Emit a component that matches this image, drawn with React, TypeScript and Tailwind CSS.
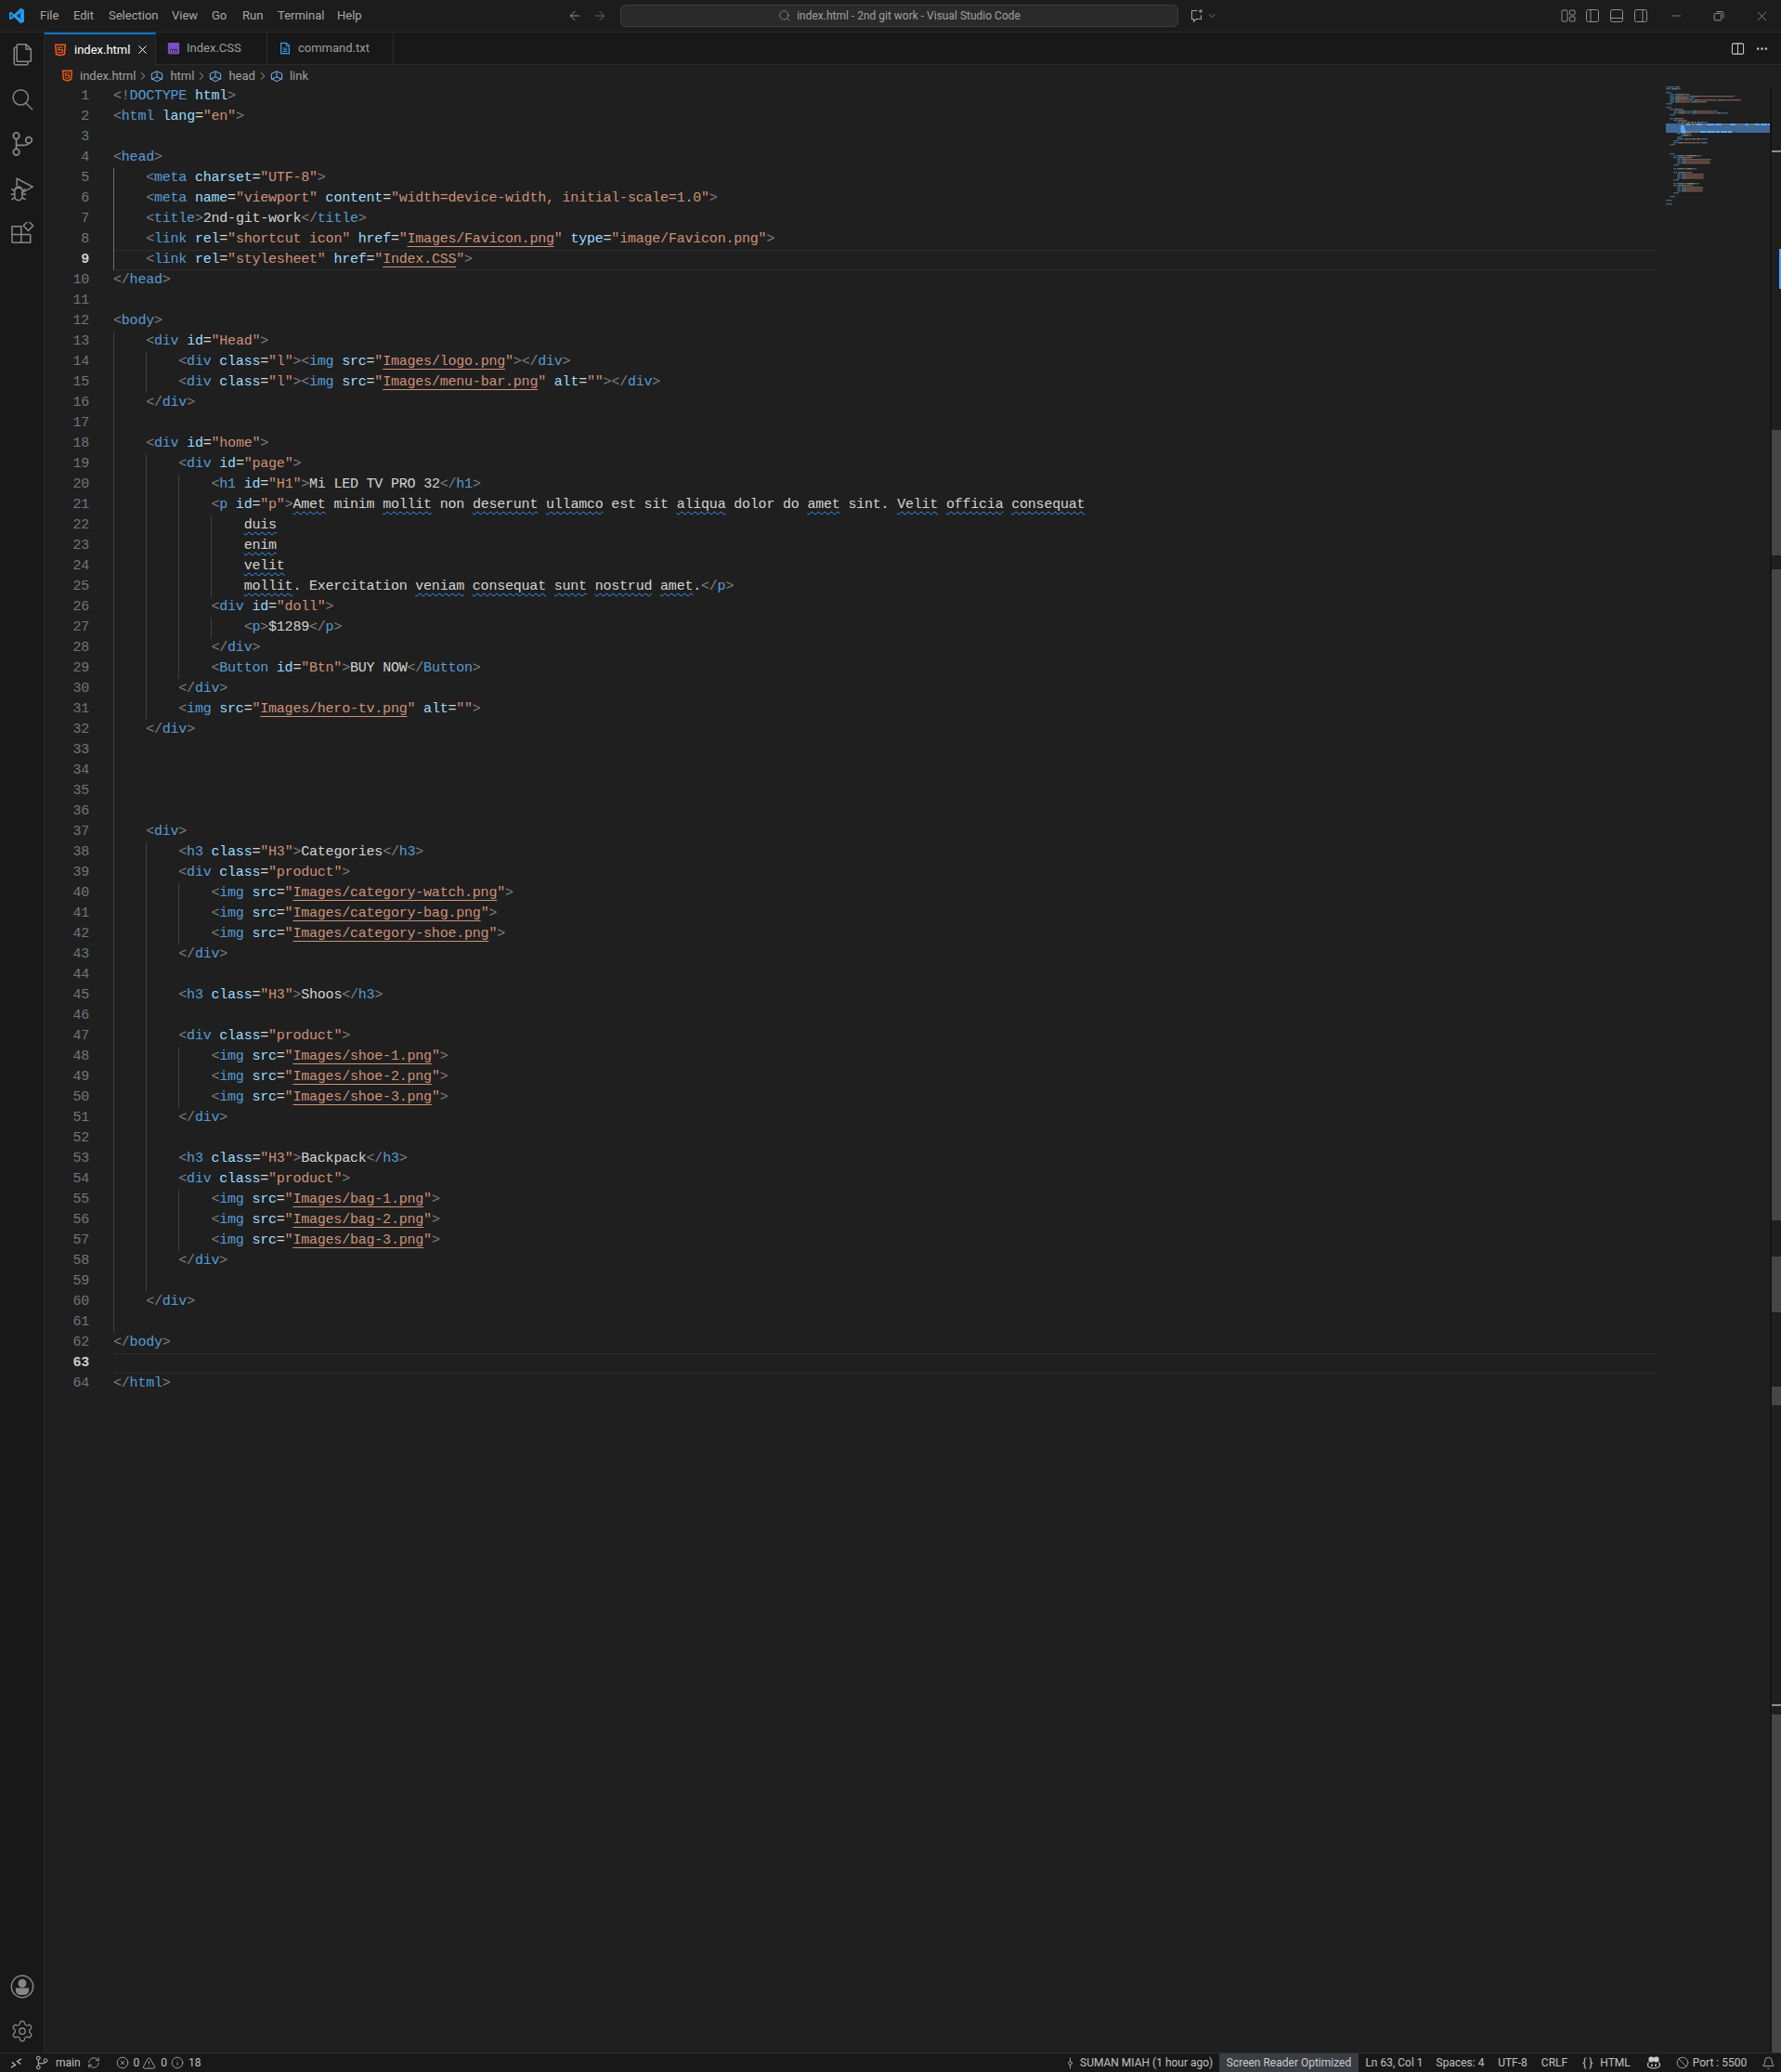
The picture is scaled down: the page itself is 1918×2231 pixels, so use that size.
import { ArrowLeft, ArrowRight, Ban, Bell, ChevronDown, ChevronRight, CircleX, Ellipsis, GitCommitVertical, Info, Minus, RefreshCw, Search, Settings, TriangleAlert, X } from "lucide-react";

const SOURCE = [
  '<!DOCTYPE html>',
  '<html lang="en">',
  '',
  '<head>',
  '    <meta charset="UTF-8">',
  '    <meta name="viewport" content="width=device-width, initial-scale=1.0">',
  '    <title>2nd-git-work</title>',
  '    <link rel="shortcut icon" href="Images/Favicon.png" type="image/Favicon.png">',
  '    <link rel="stylesheet" href="Index.CSS">',
  '</head>',
  '',
  '<body>',
  '    <div id="Head">',
  '        <div class="l"><img src="Images/logo.png"></div>',
  '        <div class="l"><img src="Images/menu-bar.png" alt=""></div>',
  '    </div>',
  '',
  '    <div id="home">',
  '        <div id="page">',
  '            <h1 id="H1">Mi LED TV PRO 32</h1>',
  '            <p id="p">Amet minim mollit non deserunt ullamco est sit aliqua dolor do amet sint. Velit officia consequat',
  '                duis',
  '                enim',
  '                velit',
  '                mollit. Exercitation veniam consequat sunt nostrud amet.</p>',
  '            <div id="doll">',
  '                <p>$1289</p>',
  '            </div>',
  '            <Button id="Btn">BUY NOW</Button>',
  '        </div>',
  '        <img src="Images/hero-tv.png" alt="">',
  '    </div>',
  '',
  '',
  '',
  '',
  '    <div>',
  '        <h3 class="H3">Categories</h3>',
  '        <div class="product">',
  '            <img src="Images/category-watch.png">',
  '            <img src="Images/category-bag.png">',
  '            <img src="Images/category-shoe.png">',
  '        </div>',
  '',
  '        <h3 class="H3">Shoos</h3>',
  '',
  '        <div class="product">',
  '            <img src="Images/shoe-1.png">',
  '            <img src="Images/shoe-2.png">',
  '            <img src="Images/shoe-3.png">',
  '        </div>',
  '',
  '        <h3 class="H3">Backpack</h3>',
  '        <div class="product">',
  '            <img src="Images/bag-1.png">',
  '            <img src="Images/bag-2.png">',
  '            <img src="Images/bag-3.png">',
  '        </div>',
  '',
  '    </div>',
  '',
  '</body>',
  '',
  '</html>',
];

const SQUIGGLED = new Set(["Amet", "mollit", "deserunt", "ullamco", "aliqua", "amet", "Velit", "officia", "consequat", "duis", "enim", "velit", "veniam", "sunt", "nostrud"]);

type Kind = "punct" | "tag" | "attr" | "str" | "link" | "text" | "squiggle" | "space";
type Token = { text: string; kind: Kind };

const KIND_CLASS: Record<Kind, string> = {
  punct: "text-[#808080]",
  tag: "text-[#569cd6]",
  attr: "text-[#9cdcfe]",
  str: "text-[#ce9178]",
  link: "text-[#ce9178] underline decoration-1 decoration-[#ce9178] underline-offset-[4px]",
  text: "text-[#d4d4d4]",
  squiggle: "text-[#d4d4d4] underline decoration-wavy decoration-1 decoration-[#3794ff] underline-offset-[3px]",
  space: "",
};

const KIND_FILL: Record<Kind, string> = {
  punct: "#47525c",
  tag: "#3a6283",
  attr: "#4f7488",
  str: "#75574b",
  link: "#75574b",
  text: "#7d7d7d",
  squiggle: "#5aa8ff",
  space: "none",
};

function tokenize(src: string): Token[] {
  const out: Token[] = [];
  let rest = src;
  let inTag = false;
  while (rest) {
    let m: RegExpMatchArray | null;
    if (!inTag) {
      m = rest.match(/^(<\/?!?)(\w+)/);
      if (m) {
        out.push({ text: m[1], kind: "punct" }, { text: m[2], kind: "tag" });
        inTag = true;
      } else {
        m = rest.match(/^[^<]+/)!;
        for (const part of m[0].split(/([\w]+)/)) {
          if (part) out.push({ text: part, kind: SQUIGGLED.has(part) ? "squiggle" : "text" });
        }
      }
    } else if ((m = rest.match(/^>/))) {
      out.push({ text: ">", kind: "punct" });
      inTag = false;
    } else if ((m = rest.match(/^"([^"]*)"/))) {
      if (m[1].startsWith("Images/") || m[1] === "Index.CSS") {
        out.push({ text: '"', kind: "str" }, { text: m[1], kind: "link" }, { text: '"', kind: "str" });
      } else {
        out.push({ text: m[0], kind: "str" });
      }
    } else if ((m = rest.match(/^[\w-]+/))) {
      out.push({ text: m[0], kind: "attr" });
    } else if ((m = rest.match(/^=/))) {
      out.push({ text: "=", kind: "text" });
    } else {
      m = rest.match(/^\s+/)!;
      out.push({ text: m[0], kind: "space" });
    }
    rest = rest.slice(m[0].length);
  }
  return out;
}

const indentOf = (s: string) => (s.length - s.trimStart().length) / 4;

const LINES = SOURCE.map((src, i) => {
  let level = indentOf(src);
  if (!src) {
    // blank lines take their guides the way the editor does
    let a = i - 1;
    let b = i + 1;
    while (a >= 0 && !SOURCE[a]) a--;
    while (b < SOURCE.length && !SOURCE[b]) b++;
    const up = a >= 0 ? indentOf(SOURCE[a]) : 0;
    const down = b < SOURCE.length ? indentOf(SOURCE[b]) : 0;
    level = up === down ? up : Math.min(up, down) + 1;
  }
  return { n: i + 1, level, tokens: tokenize(src.trimStart()), indent: indentOf(src) };
});

const Html5 = ({ className = "" }: { className?: string }) => (
  <svg viewBox="0 0 16 16" className={className} fill="none" stroke="#f0561d" strokeWidth="1.8">
    <path d="M2 1.5h12l-1 11.5-5 1.6-5-1.6z" />
    <path d="M11 4.6H5.3l.2 3h5.2l-.3 3-2.4.8-2.4-.8-.1-1" strokeWidth="1.4" />
  </svg>
);

const CssIcon = () => (
  <svg viewBox="0 0 16 16" className="w-[14px] h-[14px]">
    <rect x="1" y="1" width="14" height="14" rx="1.5" fill="#7c4fc9" />
    <path d="M3.5 9h9v4h-9z" fill="#2e1f55" />
    <path d="M4.5 10.5h1.5M7 10.5h1.5M10 10.5h1.5M4.5 12h1.5M7 12h1.5M10 12h1.5" stroke="#c9b5ee" strokeWidth="0.8" />
  </svg>
);

const TxtIcon = () => (
  <svg viewBox="0 0 16 16" className="w-[14px] h-[16px]" fill="none" stroke="#3d9be9" strokeWidth="1.4">
    <path d="M3 1.5h6.5L13 5v9.5H3z" />
    <path d="M5.5 8h5M5.5 10h5M5.5 12h5M9.5 1.5V5H13" strokeWidth="1.1" />
  </svg>
);

const Cube = () => (
  <svg viewBox="0 0 16 16" className="w-[14px] h-[14px] mr-[5px]" fill="none" stroke="#75beff" strokeWidth="1.1">
    <path d="M8 2 14.5 5v6L8 14.5 1.5 11V5z" />
    <path d="M1.5 5 8 8.2 14.5 5M8 8.2v6" transform="rotate(180 8 8.2) translate(0 -.6)" />
  </svg>
);

const Branch = ({ className = "", stroke = "currentColor" }: { className?: string; stroke?: string }) => (
  <svg viewBox="0 0 24 24" className={className} fill="none" stroke={stroke} strokeWidth="1.5">
    <circle cx="6.5" cy="4.5" r="2.8" />
    <circle cx="6.5" cy="19.5" r="2.8" />
    <circle cx="18" cy="8.5" r="2.8" />
    <path d="M6.5 7.3v9.4M6.5 13.2h7c2.5 0 4.5-1 4.5-2" />
  </svg>
);

const Copilot = () => (
  <svg viewBox="0 0 16 16" className="w-[16px] h-[16px]" fill="none" stroke="#cccccc" strokeWidth="1.2">
    <path d="M2.5 7.5c-.8 1-1 2-1 3 0 2 3 3.5 6.5 3.5s6.5-1.5 6.5-3.5c0-1-.2-2-1-3" />
    <rect x="3" y="2" width="4.5" height="5" rx="1.8" fill="#cccccc" />
    <rect x="8.5" y="2" width="4.5" height="5" rx="1.8" fill="#cccccc" />
    <path d="M6 9.5v2.5M10 9.5v2.5" strokeWidth="1.6" />
  </svg>
);

const LayoutIcon = ({ kind }: { kind: "custom" | "left" | "bottom" | "right" }) => (
  <svg viewBox="0 0 16 16" className="w-[16px] h-[16px]" fill="none" stroke="#8f8f8f" strokeWidth="1">
    {kind === "custom" && (
      <>
        <rect x="1" y="2" width="6" height="12" rx="1" />
        <rect x="9.5" y="2" width="5.5" height="5" rx="1" />
        <rect x="9.5" y="9" width="5.5" height="5" rx="1" />
      </>
    )}
    {kind !== "custom" && <rect x="1.5" y="1.5" width="13" height="13" rx="2" />}
    {kind === "left" && <path d="M6 1.5v13" />}
    {kind === "bottom" && <path d="M1.5 10.5h13" />}
    {kind === "right" && <path d="M10 1.5v13" />}
  </svg>
);

const MENU = [
  { label: "File", w: "w-[36px]" },
  { label: "Edit", w: "w-[38px]" },
  { label: "Selection", w: "w-[68px]" },
  { label: "View", w: "w-[43px]" },
  { label: "Go", w: "w-[33px]" },
  { label: "Run", w: "w-[38px]" },
  { label: "Terminal", w: "w-[64px]" },
  { label: "Help", w: "w-[40px]" },
];

const TitleBar = () => (
  <div className="flex items-center h-[35px] shrink-0 bg-[#1c1c1c] border-b border-[#2b2b2b] text-[13px] text-[#a8a8a8]">
    <div className="w-[43px] flex justify-center pr-[7px]">
      <svg viewBox="0 0 24 24" className="w-[18px] h-[18px]">
        <path fill="#1f9cf0" d="M17.6 1 8.3 9.9 3.6 6.3 1.5 7.4v9.2l2.1 1.1 4.7-3.6 9.3 8.9 5-2.4V3.4zM17.5 7.6v8.8l-5.6-4.4zM3.8 9.5 6.4 12l-2.6 2.5z" />
      </svg>
    </div>
    {MENU.map(m => (
      <span key={m.label} className={m.w}>{m.label}</span>
    ))}
    <div className="w-[208px]" />
    <ArrowLeft size={16} strokeWidth={1.25} className="text-[#a8a8a8]" />
    <ArrowRight size={16} strokeWidth={1.25} className="ml-[11px] text-[#777777]" />
    <div className="ml-[14px] w-[601px] h-[24px] flex items-center justify-center gap-[6px] rounded-[6px] bg-[#2a2a2a] border border-[#3e3e3e] text-[12px] text-[#a0a0a0]">
      <Search size={14} strokeWidth={1.25} />
      <span>index.html - 2nd git work - Visual Studio Code</span>
    </div>
    <svg viewBox="0 0 16 16" className="ml-[12px] w-[16px] h-[16px]" fill="none" stroke="#a0a0a0" strokeWidth="1.1">
      <path d="M8.5 2.5H2.5v9h2v2.5l3-2.5h5v-4" />
      <path d="M12 1v4M10 3h4" />
    </svg>
    <ChevronDown size={12} strokeWidth={1.25} className="ml-[2px]" />
    <div className="ml-auto flex items-center">
      <div className="flex gap-[10px] mr-[22px]">
        <LayoutIcon kind="custom" />
        <LayoutIcon kind="left" />
        <LayoutIcon kind="bottom" />
        <LayoutIcon kind="right" />
      </div>
      <Minus size={16} strokeWidth={1} className="mr-[32px]" />
      <svg viewBox="0 0 16 16" className="w-[12px] h-[12px] mr-[32px]" fill="none" stroke="#a8a8a8" strokeWidth="1.1">
        <rect x="1.5" y="4.5" width="10" height="10" rx="1.5" />
        <path d="M5 2h7.5a2 2 0 0 1 2 2v7.5" />
      </svg>
      <X size={17} strokeWidth={1} className="mr-[12px]" />
    </div>
  </div>
);

const ActivityBar = () => (
  <div className="w-[48px] shrink-0 flex flex-col items-center pt-[8px] pb-[10px] gap-[21px] bg-[#181818] border-r border-[#2b2b2b] text-[#868686]">
    <svg viewBox="0 -1 24 24" className="w-[28px] h-[28px]" fill="none" stroke="#868686" strokeWidth="1.3">
      <path d="M8 3h7.5L20 7.5V18a1 1 0 0 1-1 1H8a1 1 0 0 1-1-1V4a1 1 0 0 1 1-1z" />
      <path d="M15.5 3v4.5H20M7 6H5.5a1 1 0 0 0-1 1v13a2 2 0 0 0 2 2H16a1 1 0 0 0 1-1v-2" />
    </svg>
    <svg viewBox="0 -1 24 24" className="w-[28px] h-[28px]" fill="none" stroke="#868686" strokeWidth="1.3">
      <circle cx="10.5" cy="10" r="7" />
      <path d="m15.5 15.5 6 6" />
    </svg>
    <Branch className="w-[28px] h-[28px]" stroke="#868686" />
    <svg viewBox="0 1.5 24 24" className="w-[28px] h-[28px]" fill="none" stroke="#868686" strokeWidth="1.3">
      <path d="M7 10V3.5L21.5 11 11 17" />
      <path d="M5 14.5a3.5 3.5 0 0 1 7 0V20a3.5 3.5 0 0 1-7 0zM2 13l3 2M15 13l-3 2M1.5 18H5M12 18h3.5M2 23l3-2M15 23l-3-2M5.5 13.5l2-1.5 2 0 2 1.5" />
    </svg>
    <svg viewBox="0 2.5 24 24" className="w-[28px] h-[28px]" fill="none" stroke="#868686" strokeWidth="1.3">
      <path d="M2.5 6.5h8.5v15H3a.5.5 0 0 1-.5-.5zM2.5 14h17M11 21.5h8.5v-7.5M11 14V8" />
      <path d="m17.5 1.5 4.5 4.5-4.5 4.5L13 6z" />
    </svg>
    <div className="mt-auto flex flex-col items-center gap-[21px]">
      <svg viewBox="0 0 24 24" className="w-[28px] h-[28px]" fill="none" stroke="#868686" strokeWidth="1.3">
        <circle cx="12" cy="12" r="10" />
        <circle cx="12" cy="9" r="3.2" fill="#868686" />
        <path d="M6.5 14h11v1.5a4 4 0 0 1-4 3.5h-3a4 4 0 0 1-4-3.5z" fill="#868686" />
      </svg>
      <Settings size={26} strokeWidth={1.2} />
    </div>
  </div>
);

const TabBar = () => (
  <div className="flex h-[35px] shrink-0 bg-[#181818] border-b border-[#2b2b2b] text-[13px] text-[#9d9d9d]">
    <div className="w-[120px] h-[35px] flex items-center pl-[10px] bg-[#1f1f1f] border-t-2 border-t-[#0078d4] border-r border-r-[#2b2b2b] text-white">
      <Html5 className="w-[14px] h-[14px]" />
      <span className="ml-[8px]">index.html</span>
      <X size={15} strokeWidth={1.6} className="ml-auto mr-[6px]" />
    </div>
    <div className="w-[120px] flex items-center pl-[12px] border-r border-[#2b2b2b]">
      <CssIcon />
      <span className="ml-[7px]">Index.CSS</span>
    </div>
    <div className="w-[136px] flex items-center pl-[12px] border-r border-[#2b2b2b]">
      <TxtIcon />
      <span className="ml-[7px]">command.txt</span>
    </div>
    <div className="ml-auto flex items-center mr-[13px] text-[#cccccc]">
      <svg viewBox="0 0 16 16" className="w-[15px] h-[15px]" fill="none" stroke="#cccccc" strokeWidth="1.1">
        <rect x="1.5" y="2" width="13" height="12" rx="1.5" />
        <path d="M8 2v12" />
      </svg>
      <Ellipsis size={15} className="ml-[11px]" />
    </div>
  </div>
);

const Crumb = () => <ChevronRight size={14} strokeWidth={1.5} className="-mx-[1px] text-[#b4b4b4]" />;

const Breadcrumb = () => (
  <div className="flex items-center h-[23px] shrink-0 pl-[18px] gap-[2px] text-[13px] text-[#a0a0a0]">
    <Html5 className="w-[13px] h-[13px]" />
    <span className="ml-[5px]">index.html</span>
    <Crumb />
    <Cube />
    <span>html</span>
    <Crumb />
    <Cube />
    <span>head</span>
    <Crumb />
    <Cube />
    <span>link</span>
  </div>
);

const CodeRow = ({ line }: { line: (typeof LINES)[number] }) => {
  const active = line.n === 9 || line.n === 63;
  return (
    <div className="flex h-[22px]">
      <span className={`w-[48px] shrink-0 text-right leading-[22px] ${active ? "text-[#cccccc] font-bold" : "text-[#6e7681]"}`}>{line.n}</span>
      <div className="w-[26px] shrink-0" />
      <div className={`flex-1 min-w-0 flex items-center ${active ? "border-y border-[#2c2c2c]" : ""}`}>
        {Array.from({ length: line.level }, (_, i) => (
          <span key={i} className={`w-[35.16px] h-[22px] shrink-0 border-l ${i === 0 && line.n >= 5 && line.n <= 9 ? "border-[#707070]" : "border-[#404040]"}`} />
        ))}
        <span className="whitespace-pre">
          {line.tokens.map((t, i) => (
            <span key={i} className={KIND_CLASS[t.kind]}>{t.text}</span>
          ))}
        </span>
      </div>
    </div>
  );
};

const Minimap = () => {
  const rects: { x: number; y: number; w: number; fill: string; bright: boolean }[] = [];
  LINES.forEach((line, i) => {
    let col = line.indent * 4;
    line.tokens.forEach(t => {
      if (t.kind !== "space" && t.text.trim()) {
        rects.push({ x: col, y: i * 2, w: t.text.length, fill: KIND_FILL[t.kind], bright: t.kind === "squiggle" });
      }
      col += t.text.length;
    });
  });
  return (
    <div className="w-[112px] shrink-0 overflow-hidden">
      <svg width="112" height="140" viewBox="0 0 112 140">
        <rect x="0" y="40" width="112" height="10" fill="#3f6897" />
        {rects.map((r, i) => (
          <rect key={i} x={r.x} y={r.y} width={r.w} height={r.bright ? 2 : 1.4} fill={r.fill} />
        ))}
      </svg>
    </div>
  );
};

const ScrollBar = () => (
  <div className="w-[12px] shrink-0 flex flex-col border-l-2 border-[#141414]">
    <div className="h-[69px] shrink-0" />
    <div className="h-[2px] shrink-0 bg-[#8f8f8f]" />
    <div className="h-[104px] shrink-0" />
    <div className="h-[43px] w-[2px] self-end shrink-0 bg-[#4da3ff]" />
    <div className="h-[152px] shrink-0" />
    <div className="h-[135px] shrink-0 bg-[#464646]" />
    <div className="h-[15px] shrink-0" />
    <div className="h-[701px] shrink-0 bg-[#464646]" />
    <div className="h-[39px] shrink-0" />
    <div className="h-[60px] shrink-0 bg-[#464646]" />
    <div className="h-[80px] shrink-0" />
    <div className="h-[20px] shrink-0 bg-[#464646]" />
    <div className="h-[322px] shrink-0" />
    <div className="h-[2px] shrink-0 bg-[#8f8f8f]" />
    <div className="h-[9px] shrink-0" />
    <div className="flex-1 bg-[#464646]" />
  </div>
);

const Item = ({ className = "", children }: { className?: string; children: React.ReactNode }) => (
  <div className={`flex items-center justify-center h-full whitespace-nowrap ${className}`}>{children}</div>
);

const StatusBar = () => (
  <div className="flex items-center h-[21px] shrink-0 bg-[#181818] border-t border-[#2b2b2b] text-[12px] text-[#c0c0c0]">
    <Item className="w-[34px]">
      <svg viewBox="0 0 16 16" className="w-[15px] h-[15px]" fill="none" stroke="#cccccc" strokeWidth="1.2">
        <path d="m2 13 5-3-4-3M14 3l-5 3 4 3" />
      </svg>
    </Item>
    <Branch className="w-[16px] h-[16px] ml-[3px]" />
    <span className="ml-[7px]">main</span>
    <RefreshCw size={14} strokeWidth={1.25} className="ml-[7px]" />
    <CircleX size={14} strokeWidth={1.25} className="ml-[17px]" />
    <span className="ml-[5px]">0</span>
    <TriangleAlert size={15} strokeWidth={1.25} className="ml-[3px]" />
    <span className="ml-[5px]">0</span>
    <Info size={14} strokeWidth={1.25} className="ml-[4px]" />
    <span className="ml-[5px]">18</span>
    <div className="ml-auto flex items-center h-full">
      <Item className="w-[16px]"><GitCommitVertical size={15} strokeWidth={1.25} /></Item>
      <Item className="w-[153px] !justify-start pl-[3px]">SUMAN MIAH (1 hour ago)</Item>
      <Item className="w-[150px] bg-[#3a3d41] text-[#cccccc]">Screen Reader Optimized</Item>
      <Item className="w-[77px]">Ln 63, Col 1</Item>
      <Item className="w-[65px]">Spaces: 4</Item>
      <Item className="w-[48px]">UTF-8</Item>
      <Item className="w-[42px]">CRLF</Item>
      <Item className="w-[70px] gap-[8px]"><span>{"{ }"}</span><span>HTML</span></Item>
      <Item className="w-[31px]"><Copilot /></Item>
      <Item className="w-[94px] gap-[4px]"><Ban size={14} strokeWidth={1.25} /><span>Port : 5500</span></Item>
      <Item className="w-[28px]"><Bell size={15} strokeWidth={1.25} /></Item>
    </div>
  </div>
);

export default function App() {
  return (
    <div className="w-[1918px] h-[2231px] flex flex-col overflow-hidden bg-[#1f1f1f] font-['Roboto',sans-serif]">
      <TitleBar />
      <div className="flex-1 min-h-0 flex">
        <ActivityBar />
        <div className="flex-1 min-w-0 flex flex-col">
          <TabBar />
          <Breadcrumb />
          <div className="flex-1 min-h-0 flex">
            <div className="flex-1 min-w-0 pr-[7px] overflow-hidden font-['Liberation_Mono',monospace] text-[15px] tracking-[-0.21px]">
              {LINES.map(line => (
                <CodeRow key={line.n} line={line} />
              ))}
            </div>
            <Minimap />
            <ScrollBar />
          </div>
        </div>
      </div>
      <StatusBar />
    </div>
  );
}
